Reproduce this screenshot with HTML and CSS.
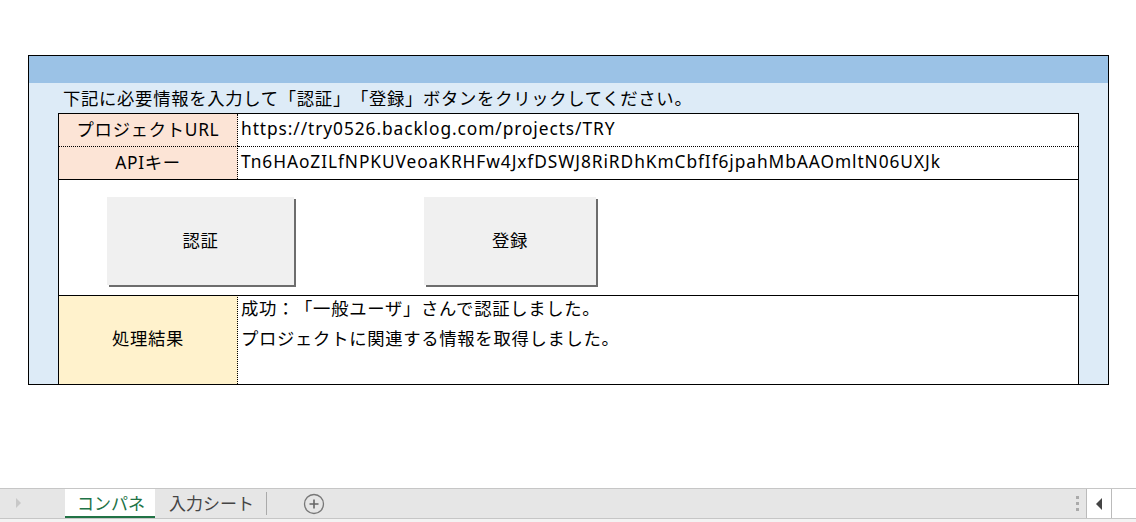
FILE: index.html
```html
<!DOCTYPE html>
<html lang="ja">
    <head>
        <meta charset="UTF-8">
        <meta name="viewport" content="width=device-width, initial-scale=1.0">
        <title>コンパネ</title>
        <link rel="stylesheet" href="styles.css">
    </head>
    <body>
        <div class="sheet">
            <div class="panel">
                <div class="panel-head"></div>
                <div class="panel-body">
                    <p class="intro">下記に必要情報を入力して「認証」「登録」ボタンをクリックしてください。</p>

                    <div class="form">
                        <div class="label label-input">プロジェクトURL</div>
                        <div class="value latin">https://try0526.backlog.com/projects/TRY</div>

                        <div class="label label-input dotted-top">APIキー</div>
                        <div class="value latin dotted-top">Tn6HAoZILfNPKUVeoaKRHFw4JxfDSWJ8RiRDhKmCbfIf6jpahMbAAOmltN06UXJk</div>

                        <div class="actions">
                            <button class="btn btn-auth" id="auth">認証</button>
                            <button class="btn btn-save" id="save">登録</button>
                        </div>

                        <div class="label label-result">処理結果</div>
                        <div class="value result" id="result">
                            <div>成功：「一般ユーザ」さんで認証しました。</div>
                            <div>プロジェクトに関連する情報を取得しました。</div>
                        </div>
                    </div>
                </div>
            </div>
        </div>

        <div class="tabbar">
            <span class="nav-arrow"></span>
            <span class="tab active">コンパネ</span>
            <span class="tab">入力シート</span>
            <span class="add-sheet">
                <svg width="22" height="22" viewBox="0 0 22 22">
                    <circle cx="11" cy="11" r="9.5" fill="none" stroke="#777" stroke-width="1.3"/>
                    <path d="M11 6.5v9M6.5 11h9" stroke="#666" stroke-width="1.6"/>
                </svg>
            </span>
            <span class="spacer"></span>
            <span class="grip"><i></i><i></i><i></i></span>
            <span class="hscroll">
                <span class="hscroll-btn"><span class="tri-left"></span></span>
                <span class="hscroll-track"></span>
            </span>
        </div>
        <div class="status-edge"></div>
    </body>
</html>
```

FILE: styles.css
```css
* {
    box-sizing: border-box;
}

body {
    margin: 0;
    width: 1136px;
    height: 522px;
    overflow: hidden;
    display: flex;
    flex-direction: column;
    background: #fff;
    font-family: "Noto Sans", "Noto Sans CJK JP", sans-serif;
    font-size: 13pt;
    color: #000;
    text-spacing-trim: space-all;
}

.sheet {
    height: 488px;
    padding: 55px 0 0 28px;
    letter-spacing: 0.7px;
}

/* outer panel */
.panel {
    width: 1081px;
    border: 1px solid #000;
    background: #ddebf7;
}

.panel-head {
    height: 27px;
    background: #9bc2e6;
}

.panel-body {
    padding: 0 29px 0 29px;
}

.intro {
    margin: 0;
    height: 30px;
    line-height: 30px;
    padding-left: 5px;
}

/* input table */
.form {
    display: grid;
    grid-template-columns: 179px 1fr;
    grid-template-rows: 32px 33px 116px 89px;
    border: 1px solid #000;
    border-bottom: none;
    background: #fff;
}

.label {
    display: flex;
    align-items: center;
    justify-content: center;
    border-right: 1px dotted #000;
    padding-bottom: 4px;
}

.label-input {
    background: #fce4d6;
}

.label-result {
    background: #fff2cc;
    border-top: 1px solid #000;
    padding-bottom: 6px;
}

.value {
    display: flex;
    align-items: center;
    padding-left: 3px;
    padding-bottom: 4px;
    white-space: nowrap;
}

.latin {
    letter-spacing: 0.92px;
}

.dotted-top {
    border-top: 1px dotted #000;
}

.actions {
    grid-column: 1 / 3;
    border-top: 1px solid #000;
    padding: 17px 0 0 48px;
    display: flex;
    align-items: flex-start;
}

.btn {
    height: 88px;
    border: none;
    background: #f0f0f0;
    box-shadow: 2px 2px 0 #6d6d6d;
    font-family: inherit;
    font-size: 13pt;
    letter-spacing: 0.7px;
    color: #000;
    padding: 0 0 4px;
    cursor: pointer;
}

.btn-auth {
    width: 187px;
}

.btn-save {
    width: 172px;
    margin-left: 130px;
}

.result {
    border-top: 1px solid #000;
    display: flex;
    flex-direction: column;
    align-items: flex-start;
    gap: 8px;
    padding-top: 1px;
    padding-bottom: 0;
    line-height: 22px;
}

/* sheet tabs */
.tabbar {
    height: 31px;
    border-top: 1px solid #c6c6c6;
    border-bottom: 1px solid #c6c6c6;
    background: #e6e6e6;
    display: flex;
    align-items: stretch;
    font-family: "Noto Sans CJK JP", sans-serif;
}

.nav-arrow {
    width: 65px;
    position: relative;
}

.nav-arrow::before {
    content: "";
    position: absolute;
    left: 16px;
    top: 9px;
    border-left: 5px solid #c8c8c8;
    border-top: 5px solid transparent;
    border-bottom: 5px solid transparent;
}

.tab {
    display: flex;
    align-items: center;
    padding: 0 13px;
    color: #444;
    font-size: 17px;
    height: 27px;
    border-right: 1px solid #aaa;
    align-self: flex-start;
}

.tab.active {
    width: 90px;
    height: 29px;
    background: #fff;
    color: #217346;
    border-right: none;
    border-bottom: 2px solid #217346;
    padding: 0 0 0 12px;
}

.tab + .tab {
    margin-top: 3px;
    height: 23px;
    padding: 0 12px 3px 14px;
}

.add-sheet {
    margin-left: 36px;
    display: flex;
    align-items: center;
}

.spacer {
    flex: 1;
}

.grip {
    width: 18px;
    display: flex;
    flex-direction: column;
    justify-content: center;
    align-items: center;
    gap: 3px;
}

.grip i {
    width: 3px;
    height: 3px;
    background: #aaa;
}

.hscroll {
    width: 50px;
    display: flex;
    border-left: 1px solid #bbb;
    background: #fff;
}

.hscroll-btn {
    width: 25px;
    border-right: 1px solid #bbb;
    display: flex;
    align-items: center;
    justify-content: center;
}

.tri-left {
    border-right: 6px solid #444;
    border-top: 6px solid transparent;
    border-bottom: 6px solid transparent;
}

.hscroll-track {
    flex: 1;
}

.status-edge {
    height: 3px;
    background: #f3f3f3;
}
```
